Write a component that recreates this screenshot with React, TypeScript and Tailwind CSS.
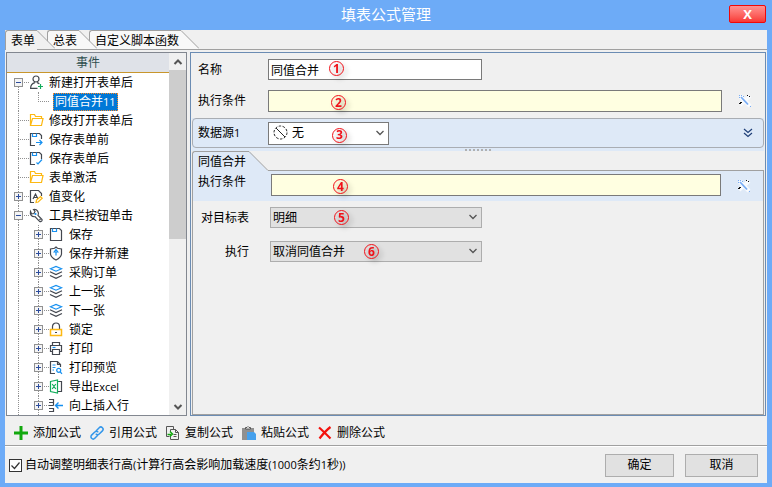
import { useState, type ReactNode } from 'react';

const INK = '#43474f';
const BLUE = '#1690f0';
const AMBER = '#fdb913';
const GREEN = '#12ad5b';

function Icon({ children }: { children: ReactNode }) {
  return (
    <svg
      aria-hidden="true"
      className="h-[15px] w-[15px] shrink-0"
      viewBox="0 0 15 15"
      fill="none"
      stroke={INK}
      strokeWidth="1.2"
    >
      {children}
    </svg>
  );
}

const icons: Record<string, ReactNode> = {
  user: (
    <Icon>
      <circle cx="7" cy="4" r="3" />
      <path d="M8.5 13.4H1.6C1.6 10.4 3.4 8.2 6 7.6M8 7.6c1 .2 1.700.5 2.300 1.200" />
      <path d="M11.500 9v5M9 11.500h5" stroke={GREEN} />
    </Icon>
  ),
  folder: (
    <Icon>
      <path
        d="M1.500 12.500v-11h4l1 2h6v2M1.500 12.500l2-7h10.500l-1.500 7z"
        stroke={AMBER}
      />
    </Icon>
  ),
  saveNext: (
    <Icon>
      <path d="M6 13.500H1.500v-12h9l2 2V7" />
      <path d="M3.500 1.500v3h4v-3M7 10.500h6M10.500 8l2.500 2.500-2.500 2.500" stroke={BLUE} />
    </Icon>
  ),
  saveDone: (
    <Icon>
      <path d="M6 13.500H1.500v-12h9l2 2V8" />
      <path d="M3.500 1.500v3h4v-3M7.500 11.500l1.500 1.500 4-4.500" stroke={BLUE} />
    </Icon>
  ),
  letter: (
    <Icon>
      <path d="M5 13.500H1.500v-12h8l3 3V7M4 10l2.500-5L9 10M5 8.500h3" />
      <path d="M7 13.500l.5-2.500 4-3.500 1.700 1.700-4 3.800z" stroke={AMBER} />
    </Icon>
  ),
  wrench: (
    <Icon>
      <path d="M4.500 1.500l1.500 2-1 2-2.500.3-1-2.300C.8 6.500 2.500 9 6 8.700l4.500 4.600c.8.7 1.800.4 2.300-.3.500-.7.400-1.500-.3-2L9 7.500c1.500-3-.8-6.700-4.500-6z" />
      <circle cx="6.500" cy="6" r="1.100" fill={BLUE} stroke="none" />
      <path d="M10.500 11l1 1" />
    </Icon>
  ),
  save: (
    <Icon>
      <path d="M1.500 1.500h9l2 2v10h-11z" />
      <path d="M3.500 1.500v3h4v-3" stroke={BLUE} />
    </Icon>
  ),
  shield: (
    <Icon>
      <path d="M7 1l1.500 1.300 4 .7v5c-.3 2.400-2.500 4.600-5.500 6-3-1.400-5.200-3.600-5.500-6V3l4-.7z" />
      <path d="M7 3.500L8.800 6H5.200zM7 6v3.500" stroke={BLUE} />
    </Icon>
  ),
  layers: (
    <Icon>
      <path d="M1.500 3.800L7 1.500l5.500 2.300L7 6.200z" stroke={BLUE} />
      <path d="M1 6.800l6 2.700 6-2.700M1 10.500l6 2.800 6-2.800" />
    </Icon>
  ),
  lock: (
    <Icon>
      <path d="M3.500 7V4.500a3.500 3.500 0 017 0V7" />
      <path d="M1.500 7.500h11v6h-11z" stroke={AMBER} strokeWidth="1.500" />
      <path d="M6 10.500h2" />
    </Icon>
  ),
  printer: (
    <Icon>
      <path d="M3.500 4.500v-3h7v3M3.500 10.500h-2v-6h11v6h-2M3.500 8.500h7v5h-7z" />
      <path d="M3.500 6.500h3" stroke={BLUE} />
    </Icon>
  ),
  preview: (
    <Icon>
      <path d="M6 13.500H1.500v-12h7l3 3V7M8.500 1.500v3h3" />
      <path d="M3.500 5h3M3.500 7.500h3M3.500 10H5M11.300 12l1.700 1.800" stroke={BLUE} />
      <circle cx="9.700" cy="10.300" r="2" stroke={BLUE} />
    </Icon>
  ),
  excel: (
    <Icon>
      <path d="M1.500 2.500l7-1.500v13l-7-1.500zM3.200 5l3.600 5M6.800 5l-3.600 5M8.500 2.500H10" stroke={GREEN} />
      <path d="M10 2.500h2.500v10H9" />
    </Icon>
  ),
  insert: (
    <Icon>
      <path d="M0 1.500h4.500v3H0M0 7.500h4.500M4.500 4.500v3M0 10.500h4.500v3H0" />
      <path d="M6.500 7.500H14M9.500 4.500l-3 3 3 3" stroke={BLUE} strokeWidth="1.400" />
    </Icon>
  ),
};

type Node = { label: string; latin?: string; icon: string; depth: 0 | 1; box?: '+' | '-' };

const nodes: Node[] = [
  { label: '修改打开表单后', icon: 'folder', depth: 0 },
  { label: '保存表单前', icon: 'saveNext', depth: 0 },
  { label: '保存表单后', icon: 'saveDone', depth: 0 },
  { label: '表单激活', icon: 'folder', depth: 0 },
  { label: '值变化', icon: 'letter', depth: 0, box: '+' },
  { label: '工具栏按钮单击', icon: 'wrench', depth: 0, box: '-' },
  { label: '保存', icon: 'save', depth: 1, box: '+' },
  { label: '保存并新建', icon: 'shield', depth: 1, box: '+' },
  { label: '采购订单', icon: 'layers', depth: 1, box: '+' },
  { label: '上一张', icon: 'layers', depth: 1, box: '+' },
  { label: '下一张', icon: 'layers', depth: 1, box: '+' },
  { label: '锁定', icon: 'lock', depth: 1, box: '+' },
  { label: '打印', icon: 'printer', depth: 1, box: '+' },
  { label: '打印预览', icon: 'preview', depth: 1, box: '+' },
  { label: '导出', latin: 'Excel', icon: 'excel', depth: 1, box: '+' },
  { label: '向上插入行', icon: 'insert', depth: 1, box: '+' },
];

/* Latin letters and digits run slightly smaller than the Chinese text around them. */
function Latin({ children }: { children: ReactNode }) {
  return <span className="font-['Open_Sans',sans-serif] text-[11px]">{children}</span>;
}

/* One 20px wide column of the tree: dotted guides with an optional expander box. */
function Guide({ line, branch, box }: { line: 'full' | 'top' | 'bottom'; branch?: boolean; box?: '+' | '-' }) {
  const span = line === 'full' ? 'inset-y-0' : line === 'top' ? 'top-0 h-[10px]' : 'bottom-0 h-[10px]';
  return (
    <span className="relative flex h-[19px] w-5 shrink-0 items-center pl-[5px]">
      <span className={`absolute left-[9px] border-l border-dotted border-[#909090] ${span}`} />
      {branch && <span className="absolute top-[9px] left-[9px] w-[11px] border-t border-dotted border-[#909090]" />}
      {box && (
        <button
          type="button"
          aria-label={box === '+' ? '展开' : '折叠'}
          className="relative flex h-[9px] w-[9px] items-center justify-center border border-[#919191] bg-[#f4f4f4]"
        >
          <span className="absolute h-px w-[5px] bg-[#2c4c9c]" />
          {box === '+' && <span className="absolute h-[5px] w-px bg-[#2c4c9c]" />}
        </button>
      )}
    </span>
  );
}

function Tree() {
  return (
    <ul className="min-h-0 flex-1 overflow-hidden pl-[2px] whitespace-nowrap">
      <li className="flex h-[19px] items-center">
        <Guide line="bottom" branch box="-" />
        {icons.user}
        <span className="ml-[5px]">新建打开表单后</span>
      </li>
      <li className="flex h-[19px] items-center">
        <Guide line="full" />
        <Guide line="top" branch />
        <span className="ml-1 h-[18px] border border-dotted border-[#ff8a28] bg-[#0078d7] px-px leading-4 text-white">
          同值合并<Latin>11</Latin>
        </span>
      </li>
      {nodes.map((n) => (
        <li key={n.label} className="flex h-[19px] items-center">
          <Guide line="full" branch={n.depth === 0} box={n.depth === 0 ? n.box : undefined} />
          {n.depth === 1 && <Guide line="full" branch box={n.box} />}
          {icons[n.icon]}
          <span className="ml-[5px]">
            {n.label}
            {n.latin && <Latin>{n.latin}</Latin>}
          </span>
        </li>
      ))}
    </ul>
  );
}

function Chevron({ up, bold }: { up?: boolean; bold?: boolean }) {
  return (
    <svg
      aria-hidden="true"
      className="h-[6px] w-[10px]"
      viewBox="0 0 10 6"
      fill="none"
      stroke="#555"
      strokeWidth={bold ? 2 : 1.3}
    >
      <path d={up ? 'M1.500 5L5 1.500 8.500 5' : 'M1.500 1L5 4.500 8.500 1'} />
    </svg>
  );
}

function FormTab({ label, active }: { label: string; active?: boolean }) {
  const fill = active ? '#f0f0f0' : '#f8f8f8';
  return (
    <button
      type="button"
      role="tab"
      aria-selected={!!active}
      className={`relative -mr-2 flex h-[19px] ${active ? 'z-30 -mb-px h-[20px]' : label === '总表' ? 'z-20' : 'z-10'}`}
    >
      <span
        className={`h-full rounded-tl-[3px] border-t border-l border-[#a0a0a0] pr-[2px] pl-[5px] leading-[20px] ${active ? 'bg-[#f0f0f0]' : 'bg-[#f8f8f8]'}`}
      >
        {label}
      </span>
      <svg aria-hidden="true" className="h-[19px] w-[18px]" viewBox="0 0 18 19">
        <path d="M0 0L18 19H0z" fill={fill} />
        <path d="M0 .5L18 18.500" stroke="#a0a0a0" fill="none" />
      </svg>
    </button>
  );
}

function Marker({ text, place }: { text: string; place: string }) {
  return (
    <span
      className={`pointer-events-none absolute flex h-[15px] w-[15px] items-center justify-center rounded-full border border-[#f01018] font-['Open_Sans',sans-serif] text-[12px] leading-none font-bold text-[#f01018] drop-shadow-[3px_3px_2px_rgba(0,0,0,0.3)] ${place}`}
    >
      {text}
    </span>
  );
}

function EditButton() {
  return (
    <button type="button" aria-label="编辑条件" className="flex h-[15px] w-[15px] items-center justify-center">
      <svg aria-hidden="true" className="h-[14px] w-[14px]" viewBox="0 0 14 14" fill="none">
        <path d="M2 2l10 10M12 2L2 11" stroke="#f9fbfe" strokeWidth="4" />
        <path d="M3 3l7 7.500" stroke="#79adf5" strokeWidth="1.800" />
        <path d="M1 1.500h1M3 1.500h1M5 2.500h1M1 3.500h1M12 12.500h1" stroke="#79adf5" />
        <path d="M9 1.500h1M11 2.500h1M2 8.500h2M1 9.500h2" stroke="#111" />
      </svg>
    </button>
  );
}

function GreySelect({ id, value, children }: { id: string; value: string; children: ReactNode }) {
  return (
    <div className="relative w-[212px]">
      <select
        id={id}
        defaultValue={value}
        className="block h-[21px] w-full appearance-none rounded-none border border-[#adadad] bg-[#e1e1e1] px-[2px] outline-none"
      >
        <option>{value}</option>
      </select>
      <span className="pointer-events-none absolute top-[7px] right-1 flex">
        <Chevron />
      </span>
      {children}
    </div>
  );
}

function RightPanel() {
  return (
    <section className="flex min-w-0 flex-1 flex-col border border-[#6b8cb3] pr-px pl-px">
      <div className="flex flex-col gap-[10px] pt-[6px] pb-[6px]">
        <div className="flex items-center pl-[6px]">
          <label htmlFor="name" className="w-[70px]">名称</label>
          <div className="relative w-[214px]">
            <input id="name" defaultValue="同值合并" className="block h-[21px] w-full border border-[#7a7a7a] bg-white px-[2px] outline-none" />
            <Marker text="1" place="top-[2px] left-[61px]" />
          </div>
        </div>
        <div className="flex items-center pr-[12px] pl-[6px]">
          <label htmlFor="cond" className="w-[70px]">执行条件</label>
          <div className="relative flex-1">
            <input id="cond" className="block h-[22px] w-full border border-[#7a7a7a] bg-[#ffffe1] px-[2px] outline-none" />
            <Marker text="2" place="top-[5px] left-[63px]" />
          </div>
          <span className="ml-[15px]">
            <EditButton />
          </span>
        </div>
      </div>

      <div className="flex flex-col bg-[#dee9f7]">
        <div className="flex h-[30px] items-center rounded-[4px] border border-[#a9adb3] pr-[10px] pl-[5px]">
          <label htmlFor="source" className="w-[70px]">数据源<Latin>1</Latin></label>
          <div className="relative w-[121px]">
            <select
              id="source"
              defaultValue="无"
              className="block h-[23px] w-full appearance-none rounded-none border border-[#7a7a7a] bg-white pl-[23px] outline-none"
            >
              <option>无</option>
            </select>
            <svg
              aria-hidden="true"
              className="pointer-events-none absolute top-[3px] left-[5px] h-[15px] w-[15px]"
              viewBox="0 0 15 15"
              fill="none"
              stroke="#222"
            >
              <circle cx="7.500" cy="7.500" r="6.500" strokeDasharray="2.500 1.500" />
              <path d="M3 3l9 9" />
            </svg>
            <span className="pointer-events-none absolute top-2 right-1 flex">
              <Chevron />
            </span>
            <Marker text="3" place="top-[6px] left-[64px]" />
          </div>
          <button type="button" aria-label="展开数据源" className="ml-auto">
            <svg aria-hidden="true" className="h-[10px] w-[10px]" viewBox="0 0 10 10" fill="none" stroke="#1f3f78" strokeWidth="1.200">
              <path d="M1 1l4 3.500L9 1M1 5l4 3.500L9 5" />
            </svg>
          </button>
        </div>
        <div className="flex h-[3px] items-center justify-center gap-[2px]">
          {[0, 1, 2, 3, 4, 5, 6].map((i) => (
            <span key={i} className="h-[2px] w-[2px] bg-[#b0b0b0]" />
          ))}
        </div>
      </div>

      <div className="flex">
        <button type="button" role="tab" aria-selected="true" className="relative z-10 flex h-5">
          <span className="h-full rounded-tl-[3px] border-t border-l border-[#a0a0a0] bg-[#dee9f7] pr-[3px] pl-[5px] leading-5">
            同值合并
          </span>
          <svg aria-hidden="true" className="h-5 w-[19px]" viewBox="0 0 19 20">
            <path d="M0 0L19 20H0z" fill="#dee9f7" />
            <path d="M0 .5L19 19.500" stroke="#a0a0a0" fill="none" />
          </svg>
        </button>
        <span className="flex-1 border-b border-[#a0a0a0]" />
      </div>
      <div className="flex flex-1 flex-col border-r border-b border-l border-[#a0a0a0]">
        <div className="flex h-[30px] items-start bg-[#dee9f7] pt-[3px] pr-[12px] pl-[5px]">
          <label htmlFor="cond2" className="w-[73px] leading-4">执行条件</label>
          <div className="relative flex-1">
            <input id="cond2" className="block h-[22px] w-full border border-[#7a7a7a] bg-[#ffffe1] px-[2px] outline-none" />
            <Marker text="4" place="top-[5px] left-[62px]" />
          </div>
          <span className="mt-1 ml-[15px]">
            <EditButton />
          </span>
        </div>
        <div className="flex flex-col gap-[13px] pt-[6px]">
          <div className="flex items-center">
            <label htmlFor="target" className="w-[77px] pr-[21px] text-right">对目标表</label>
            <GreySelect id="target" value="明细">
              <Marker text="5" place="top-[3px] left-[64px]" />
            </GreySelect>
          </div>
          <div className="flex items-center">
            <label htmlFor="action" className="w-[77px] pr-[21px] text-right">执行</label>
            <GreySelect id="action" value="取消同值合并">
              <Marker text="6" place="top-[3px] left-[94px]" />
            </GreySelect>
          </div>
        </div>
      </div>
    </section>
  );
}

const tools: { label: string; art: ReactNode }[] = [
  { label: '添加公式', art: <path d="M7 0v14M0 7h14" stroke="#12a80e" strokeWidth="3" /> },
  {
    label: '引用公式',
    art: (
      <g stroke="#3597ea" strokeWidth="1.500" strokeLinecap="round">
        <path d="M6.500 4.500l2.700-2.800a2.200 2.200 0 013.200 3.200L9.200 8a2.200 2.200 0 01-3 .2" />
        <path d="M7.500 9.500l-2.700 2.800a2.200 2.200 0 01-3.200-3.200L4.800 6a2.200 2.200 0 013-.2" />
      </g>
    ),
  },
  {
    label: '复制公式',
    art: (
      <g>
        <path d="M3.500 10.500h-3v-10h7v3" stroke="#555" />
        <path d="M4.500 6V3.500h5l3 3v7h-8V10M9.500 3.500v3h3M7.500 8.500h3M7.500 10.500h3" stroke="#555" />
        <path d="M1.500 8.500h4M4 5.500L6.500 8 4 10.500" stroke="#12a80e" strokeWidth="1.400" />
      </g>
    ),
  },
  {
    label: '粘贴公式',
    art: (
      <g>
        <path d="M0 2h12v5H5v7H0z" fill="#909090" />
        <path d="M3.500 3V1.500H5L6 .5l1 1h1.500V3z" fill="#fff" stroke="#555" />
        <path d="M5 6h7l2 2v6H5z" fill="#45a0ec" />
      </g>
    ),
  },
  { label: '删除公式', art: <path d="M1 1.500c3.500 3 7 6.500 11.500 11M12.500 1C8.500 4 5 8 1.500 12.500" stroke="#f3120d" strokeWidth="2.200" /> },
];

export default function App() {
  const [auto, setAuto] = useState(true);
  return (
    <main className="flex h-screen flex-col bg-[#6dabf7] px-[5px] pb-1 font-['Liberation_Sans','Noto_Sans_CJK_SC',sans-serif] text-[12px] leading-[18px] text-black">
      <header className="relative flex h-[30px] shrink-0 items-center justify-center">
        <h1 className="text-[15px] text-white">填表公式管理</h1>
        <button
          type="button"
          aria-label="关闭"
          className="absolute top-[5px] right-px flex h-[18px] w-[37px] items-center justify-center rounded-[2px] border border-[#f00808] bg-linear-to-b from-[#ff9090] to-[#f83434] font-['Open_Sans',sans-serif] text-[13px] font-bold text-white"
        >
          X
        </button>
      </header>

      <div className="flex min-h-0 flex-1 flex-col bg-[#f0f0f0]">
        <nav role="tablist" className="flex h-5 shrink-0 border-b border-[#a0a0a0]">
          <FormTab label="表单" active />
          <FormTab label="总表" />
          <FormTab label="自定义脚本函数" />
        </nav>

        <div className="flex min-h-0 flex-1 gap-[3px] px-px pt-[2px]">
          <aside className="flex w-[181px] shrink-0 border border-[#828790] bg-white">
            <div className="flex min-w-0 flex-1 flex-col">
              <h2 className="h-5 shrink-0 border-b border-[#c8962c] bg-[#dfe2e8] text-center leading-5 text-[#2f4f4f]">事件</h2>
              <Tree />
            </div>
            <div className="flex w-[17px] shrink-0 flex-col items-center bg-[#f0f0f0]">
              <button type="button" aria-label="向上滚动" className="flex h-[17px] w-full items-center justify-center">
                <Chevron up bold />
              </button>
              <div className="flex w-full flex-1 flex-col">
                <span className="h-[169px] w-full bg-[#cdcdcd]" />
              </div>
              <button type="button" aria-label="向下滚动" className="flex h-[17px] w-full items-center justify-center">
                <Chevron bold />
              </button>
            </div>
          </aside>
          <RightPanel />
        </div>

        <div className="flex h-[30px] shrink-0 items-center gap-[9px] border-b border-[#a0a0a0] pt-1 pl-[9px] whitespace-nowrap">
          {tools.map((t) => (
            <button key={t.label} type="button" className="flex items-center gap-[5px]">
              <svg aria-hidden="true" className="h-[14px] w-[14px]" viewBox="0 0 14 14" fill="none">
                {t.art}
              </svg>
              {t.label}
            </button>
          ))}
        </div>

        <footer className="flex h-[37px] shrink-0 items-center border-t border-white pr-[9px] pl-1 whitespace-nowrap">
          <label className="flex items-center gap-[3px]">
            <span className="relative h-[13px] w-[13px]">
              <input
                type="checkbox"
                checked={auto}
                onChange={(e) => setAuto(e.target.checked)}
                className="block h-[13px] w-[13px] appearance-none border border-[#333] bg-white"
              />
              {auto && (
                <svg aria-hidden="true" className="pointer-events-none absolute inset-0" viewBox="0 0 13 13" fill="none" stroke="#333" strokeWidth="1.200">
                  <path d="M2.500 6.500l3 3 5-6" />
                </svg>
              )}
            </span>
            <span>
              自动调整明细表行高<Latin>(</Latin>计算行高会影响加载速度<Latin>(1000</Latin>条约<Latin>1</Latin>秒<Latin>))</Latin>
            </span>
          </label>
          <div className="ml-auto flex gap-[11px]">
            <button type="button" className="h-[23px] w-[69px] border border-[#adadad] bg-[#e1e1e1]">确定</button>
            <button type="button" className="h-[23px] w-[73px] border border-[#adadad] bg-[#e1e1e1]">取消</button>
          </div>
        </footer>
      </div>
    </main>
  );
}
